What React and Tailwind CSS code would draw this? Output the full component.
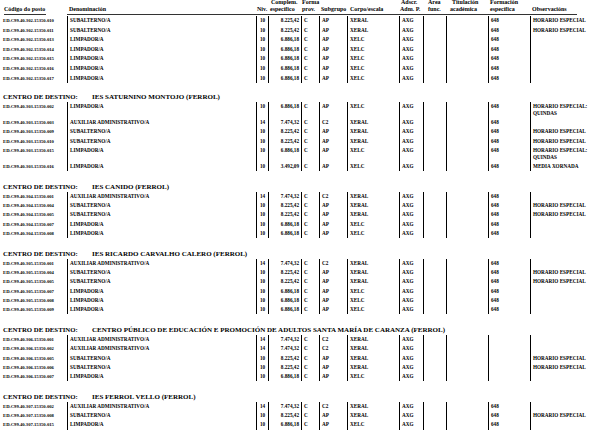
const COLS =
  "grid grid-cols-[67px_189px_12px_33px_18px_28px_52px_24px_23px_42px_42px_85px]";

const AUX = ["AUXILIAR ADMINISTRATIVO/A", "14", "7.474,32", "C", "C2", "XERAL", "AXG"];
const SUB = ["SUBALTERNO/A", "10", "8.225,42", "C", "AP", "XERAL", "AXG"];
const LIM = ["LIMPADOR/A", "10", "6.886,18", "C", "AP", "XELC", "AXG"];
const HE = "HORARIO ESPECIAL";

const mk = (pre, num, base, fe, obs) => ({
  code: `ED.C99.40.${pre}.15350.${num}`,
  vals: base,
  fe,
  obs,
});

const groups = [
  {
    title: null,
    rows: [
      mk("302", "010", SUB, "648", [HE]),
      mk("302", "011", SUB, "648", [HE]),
      mk("302", "013", LIM, "648", []),
      mk("302", "014", LIM, "648", []),
      mk("302", "015", LIM, "648", []),
      mk("302", "016", LIM, "648", []),
      mk("302", "017", LIM, "648", []),
    ],
  },
  {
    title: "IES SATURNINO MONTOJO (FERROL)",
    rows: [
      mk("303", "002", LIM, "648", ["HORARIO ESPECIAL:", "QUINDAS"]),
      mk("303", "003", AUX, "648", []),
      mk("303", "009", SUB, "648", [HE]),
      mk("303", "010", SUB, "648", [HE]),
      mk("303", "015", LIM, "648", ["HORARIO ESPECIAL:", "QUINDAS"]),
      mk(
        "303",
        "016",
        ["LIMPADOR/A", "10", "3.492,09", "C", "AP", "XELC", "AXG"],
        "648",
        ["MEDIA XORNADA"]
      ),
    ],
  },
  {
    title: "IES CANIDO (FERROL)",
    rows: [
      mk("304", "001", AUX, "648", []),
      mk("304", "004", SUB, "648", [HE]),
      mk("304", "005", SUB, "648", [HE]),
      mk("304", "007", LIM, "648", []),
      mk("304", "008", LIM, "648", []),
    ],
  },
  {
    title: "IES RICARDO CARVALHO CALERO (FERROL)",
    rows: [
      mk("305", "001", AUX, "648", []),
      mk("305", "004", SUB, "648", [HE]),
      mk("305", "005", SUB, "648", [HE]),
      mk("305", "007", LIM, "648", []),
      mk("305", "008", LIM, "648", []),
      mk("305", "009", LIM, "648", []),
    ],
  },
  {
    title:
      "CENTRO PÚBLICO DE EDUCACIÓN E PROMOCIÓN DE ADULTOS SANTA MARÍA DE CARANZA (FERROL)",
    rows: [
      mk("306", "001", AUX, "", []),
      mk("306", "002", AUX, "", []),
      mk("306", "005", SUB, "", [HE]),
      mk("306", "006", SUB, "", [HE]),
      mk("306", "007", LIM, "", []),
    ],
  },
  {
    title: "IES FERROL VELLO (FERROL)",
    rows: [
      mk("307", "002", AUX, "648", []),
      mk("307", "008", SUB, "648", [HE]),
      mk("307", "015", LIM, "648", []),
    ],
  },
];

const Row = ({ row, tall }) => {
  const [denom, niv, comp, forma, sub, corpo, adscr] = row.vals;
  const two = row.obs.length > 1;
  return (
    <div
      className={`${COLS} text-[5.2px] font-bold ${
        tall ? "leading-[9.6px]" : "leading-[9.3px]"
      }`}
    >
      <div className="pl-[3px] text-[4.7px] whitespace-nowrap">{row.code}</div>
      <div className={styles.cell}>{denom}</div>
      <div className={`${styles.line} text-center`}>{niv}</div>
      <div className={`${styles.line} text-right pr-[2px]`}>{comp}</div>
      <div className={styles.cell}>{forma}</div>
      <div className={styles.cell}>{sub}</div>
      <div className={styles.cell}>{corpo}</div>
      <div className={styles.cell}>{adscr}</div>
      <div className={styles.line}></div>
      <div className={styles.line}></div>
      <div className={styles.cell}>{row.fe}</div>
      <div className={`${styles.cell} ${two ? "leading-[7px] py-[1px]" : ""}`}>
        {row.obs.map((o) => (
          <div key={o}>{o}</div>
        ))}
      </div>
    </div>
  );
};

const Header = () => (
  <div className="flex items-end h-[15px] text-[6px] leading-[7px] font-bold">
    <div className="w-[67px] pl-[4px]">
      <span className="block w-[42px] border-b border-[#333] pb-[1px]">Código do posto</span>
    </div>
    <div className="w-[510px] border-b border-[#333] pb-[1px] grid grid-cols-[189px_12px_33px_18px_28px_52px_24px_23px_42px_42px_47px] items-end">
      <div className="pl-[2px]">Denominación</div>
      <div className="pl-[1px]">Niv.</div>
      <div className="pl-[2px] whitespace-nowrap">
        <div className="pl-[1px]">Complem.</div>
        <div>específico</div>
      </div>
      <div className="pl-[1px]">
        <div>Forma</div>
        <div>prov.</div>
      </div>
      <div className="pl-[2px]">Subgrupo</div>
      <div className="pl-[3px]">Corpo/escala</div>
      <div className="pl-[1px] whitespace-nowrap">
        <div className="pl-[1px]">Adscr.</div>
        <div>Adm. P.</div>
      </div>
      <div className="pl-[5px]">
        <div>Área</div>
        <div>func.</div>
      </div>
      <div className="pl-[4px]">
        <div className="pl-[2px]">Titulación</div>
        <div>académica</div>
      </div>
      <div className="pl-[2px]">
        <div>Formación</div>
        <div>específica</div>
      </div>
      <div className="pl-[2px]">Observacións</div>
    </div>
  </div>
);

export default function App() {
  return (
    <div className="w-[615px] h-[439px] bg-white text-black font-['Liberation_Serif',serif] overflow-hidden">
      <Header />
      {groups.map((g, i) => (
        <div
          key={i}
          className={i === 0 ? "mt-[1px]" : i === 1 ? "mt-[8.8px]" : "mt-[10.5px]"}
        >
          {g.title && (
            <div className="flex h-[10px] leading-[10px] font-bold pl-[3px] whitespace-nowrap">
              <span className="w-[89px] text-[6.8px]">CENTRO DE DESTINO:</span>
              <span className="text-[7px]">{g.title}</span>
            </div>
          )}
          {g.rows.map((r) => (
            <Row key={r.code} row={r} tall={i === 0} />
          ))}
        </div>
      ))}
    </div>
  );
}

const styles = {
  line: "border-l border-black",
  cell: "border-l border-black pl-[2px] whitespace-nowrap",
};
